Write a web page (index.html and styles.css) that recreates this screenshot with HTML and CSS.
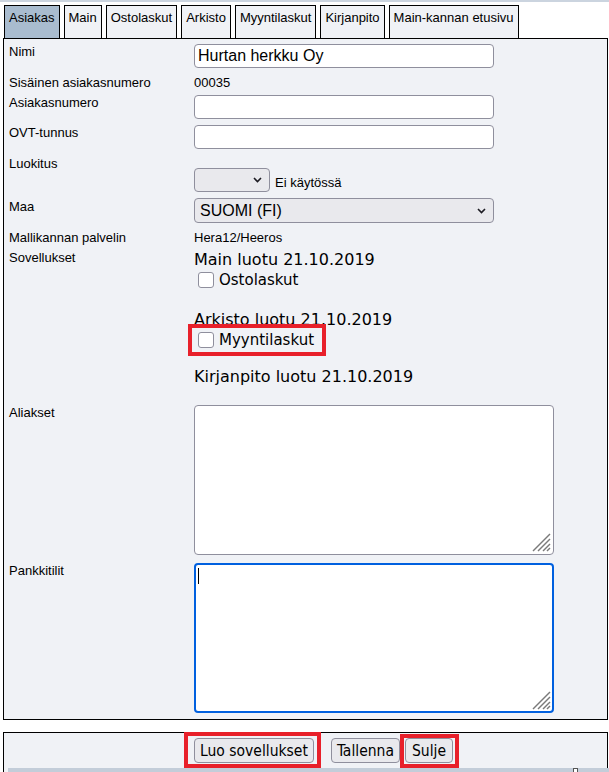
FILE: index.html
```html
<!DOCTYPE html>
<html lang="fi">
	<head>
		<meta charset="UTF-8" />
		<meta name="viewport" content="width=device-width, initial-scale=1.0" />
		<title>Asiakas</title>
		<link rel="stylesheet" href="styles.css">
	</head>
	<body>
		<div class="top-strip"></div>
		<div class="tabs">
			<div class="tab active">Asiakas</div>
			<div class="tab">Main</div>
			<div class="tab">Ostolaskut</div>
			<div class="tab">Arkisto</div>
			<div class="tab">Myyntilaskut</div>
			<div class="tab">Kirjanpito</div>
			<div class="tab">Main-kannan etusivu</div>
		</div>
		<div class="panel">
			<div class="row">
				<div class="label">Nimi</div>
				<input type="text" class="field" value="Hurtan herkku Oy" />
			</div>
			<div class="row row-text">
				<div class="label">Sisäinen asiakasnumero</div>
				<div class="value">00035</div>
			</div>
			<div class="row row-short">
				<div class="label">Asiakasnumero</div>
				<input type="text" class="field" />
			</div>
			<div class="row">
				<div class="label">OVT-tunnus</div>
				<input type="text" class="field" />
			</div>
			<div class="row row-short">
				<div class="label">Luokitus</div>
				<div class="class-value">
					<div class="select select-small">
						<span></span>
						<svg class="chevron" width="9" height="6" viewBox="0 0 9 6"><polyline points="1,1 4.5,4.5 8,1" fill="none" stroke="#1c1b22" stroke-width="1.6" /></svg>
					</div>
					<span class="not-used">Ei käytössä</span>
				</div>
			</div>
			<div class="row">
				<div class="label label-offset">Maa</div>
				<div class="select select-wide">
					<span>SUOMI (FI)</span>
					<svg class="chevron" width="9" height="6" viewBox="0 0 9 6"><polyline points="1,1 4.5,4.5 8,1" fill="none" stroke="#1c1b22" stroke-width="1.6" /></svg>
				</div>
			</div>
			<div class="row row-text">
				<div class="label">Mallikannan palvelin</div>
				<div class="value">Hera12/Heeros</div>
			</div>
			<div class="row row-apps">
				<div class="label">Sovellukset</div>
				<div class="apps">
					<div class="app-line">Main luotu 21.10.2019</div>
					<label class="check"><input type="checkbox" class="box" /><span>Ostolaskut</span></label>
					<div class="app-line app-second">Arkisto luotu 21.10.2019</div>
					<label class="check marked"><input type="checkbox" class="box" /><span>Myyntilaskut</span></label>
					<div class="app-line app-third">Kirjanpito luotu 21.10.2019</div>
				</div>
			</div>
			<div class="row row-area">
				<div class="label">Aliakset</div>
				<div class="area-wrap">
					<textarea class="area"></textarea>
					<svg class="grip" width="20" height="20" viewBox="0 0 20 20">
						<line x1="2" y1="19" x2="19" y2="2" />
						<line x1="7" y1="19" x2="19" y2="7" />
						<line x1="12" y1="19" x2="19" y2="12" />
						<line x1="16" y1="19" x2="19" y2="16" />
					</svg>
				</div>
			</div>
			<div class="row row-last">
				<div class="label">Pankkitilit</div>
				<div class="area-wrap">
					<textarea class="area area-focus"></textarea>
					<span class="caret"></span>
					<svg class="grip" width="20" height="20" viewBox="0 0 20 20">
						<line x1="2" y1="19" x2="19" y2="2" />
						<line x1="7" y1="19" x2="19" y2="7" />
						<line x1="12" y1="19" x2="19" y2="12" />
						<line x1="16" y1="19" x2="19" y2="16" />
					</svg>
				</div>
			</div>
		</div>
		<div class="button-bar">
			<span class="mark mark-create"><button class="btn">Luo sovellukset</button></span>
			<button class="btn btn-save">Tallenna</button>
			<span class="mark mark-close"><button class="btn btn-close">Sulje</button></span>
		</div>
		<div class="bottom-strip"><span class="strip-marker"></span></div>
	</body>
</html>
```

FILE: styles.css
```css
* {
	box-sizing: border-box;
}
html,
body {
	margin: 0;
	padding: 0;
	height: 772px;
	overflow: hidden;
}
body {
	background: #fff;
	color: #000;
	font-family: "Liberation Sans", Arial, sans-serif;
	font-size: 13px;
}
.top-strip {
	height: 2px;
	background: #cbd4df;
}
.tabs {
	display: flex;
	gap: 4px;
	margin-top: 3px;
	padding-left: 4px;
}
.tab {
	height: 33px;
	padding: 4px 4px 0;
	border: 1px solid #000;
	border-bottom: none;
	background: #f0f2f6;
	line-height: 15px;
	white-space: nowrap;
}
.tab.active {
	background: #a9bccf;
}
.panel {
	margin-left: 3px;
	width: 605px;
	border: 1px solid #000;
	background: #f0f2f6;
	padding: 5px 0 6px 5px;
}
.row {
	display: flex;
	align-items: flex-start;
	margin-bottom: 7px;
}
.row-text {
	margin-bottom: 5px;
}
.row-short {
	margin-bottom: 6px;
}
.row-apps {
	margin-bottom: 19px;
}
.row-area {
	margin-bottom: 8px;
}
.row-last {
	margin-bottom: 0;
}
.label {
	width: 185px;
	flex: none;
	line-height: 15px;
}
.label-offset {
	padding-top: 1px;
}
.value {
	line-height: 15px;
}
.field {
	width: 300px;
	height: 24px;
	margin: 0;
	padding: 0 3px;
	border: 1px solid #8f8f9d;
	border-radius: 4px;
	background: #fff;
	color: #000;
	font: 16px "Liberation Sans", Arial, sans-serif;
}
.class-value {
	display: flex;
	align-items: flex-end;
	padding-top: 12px;
}
.select {
	display: flex;
	align-items: center;
	justify-content: space-between;
	height: 24px;
	padding: 0 7px 0 5px;
	border: 1px solid #8f8f9d;
	border-radius: 4px;
	background: #e9e9ed;
	font-size: 16px;
}
.select-small {
	width: 76px;
}
.select-wide {
	width: 300px;
	height: 25px;
}
.chevron {
	display: block;
}
.not-used {
	margin-left: 5px;
	margin-bottom: 2px;
	line-height: 15px;
}
.apps {
	font-family: "DejaVu Sans", Verdana, sans-serif;
}
.app-line {
	font-size: 16px;
	line-height: 19px;
	white-space: nowrap;
}
.app-second {
	margin-top: 20px;
}
.app-third {
	margin-top: 17px;
}
.check {
	display: flex;
	align-items: center;
	width: 126px;
	height: 20px;
	margin-top: 1px;
	font-size: 15px;
	line-height: 20px;
}
.box {
	appearance: none;
	width: 16px;
	height: 16px;
	margin: 0 5px 0 4px;
	border: 1px solid #8f8f9d;
	border-radius: 3px;
	background: #fff;
}
.check.marked {
	outline: 4px solid #e8202a;
	outline-offset: 2px;
}
.area-wrap {
	position: relative;
	width: 360px;
	height: 150px;
}
.area {
	display: block;
	width: 360px;
	height: 150px;
	margin: 0;
	border: 1px solid #8f8f9d;
	border-radius: 4px;
	background: #fff;
	resize: none;
	outline: none;
}
.area-focus {
	border: 2px solid #0060df;
}
.caret {
	position: absolute;
	left: 4px;
	top: 5px;
	width: 1px;
	height: 16px;
	background: #000;
}
.grip {
	position: absolute;
	right: 3px;
	bottom: 3px;
}
.grip line {
	stroke: #7a7a7a;
	stroke-width: 1.5;
}
.button-bar {
	display: flex;
	align-items: flex-start;
	margin: 12px 0 0 3px;
	width: 605px;
	height: 60px;
	padding-left: 180px;
	border: 1px solid #000;
	background: #f0f2f6;
}
.btn {
	height: 25px;
	margin: 0;
	padding: 0 5px;
	border: 1px solid #8f8f9d;
	border-radius: 4px;
	background: #e9e9ed;
	color: #000;
	font-family: "DejaVu Sans Condensed", "DejaVu Sans", Verdana, sans-serif;
	font-size: 15.5px;
	font-stretch: condensed;
	white-space: nowrap;
}
.mark {
	display: flex;
	border: 4px solid #e8202a;
}
.mark-create {
	margin-top: -1px;
	padding: 2px 3px 1px 6px;
}
.btn-save {
	margin: 5px 0 0 10px;
	padding: 0 5px;
}
.btn-close {
	padding: 0 6px;
}
.mark-close {
	margin: 1px 0 0 0;
	padding: 0 2px 1px 1px;
}
.bottom-strip {
	position: fixed;
	left: 8px;
	right: 0;
	bottom: 0;
	height: 4px;
	background: #c3cdd9;
}
.strip-marker {
	position: absolute;
	left: 565px;
	top: 0;
	width: 5px;
	height: 4px;
	border: 1px solid #555;
	border-bottom: none;
	background: #fff;
}
```
